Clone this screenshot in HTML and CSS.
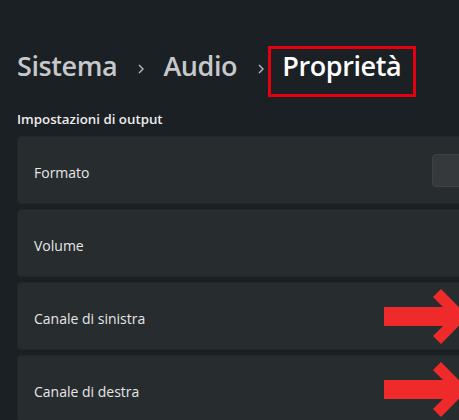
FILE: index.html
```html
<!DOCTYPE html>
<html lang="it">
<head>
<meta charset="utf-8">
<link rel="stylesheet" href="styles.css">
</head>
<body>
<main class="page">
  <nav class="crumbs">
    <span class="crumb">Sistema</span>
    <svg class="chev" width="6" height="10" viewBox="0 0 6 10"><path d="M1 1 L5 5 L1 9" fill="none" stroke="#b8babc" stroke-width="1.4"/></svg>
    <span class="crumb">Audio</span>
    <svg class="chev" width="6" height="10" viewBox="0 0 6 10"><path d="M1 1 L5 5 L1 9" fill="none" stroke="#b8babc" stroke-width="1.4"/></svg>
    <span class="crumb current">Proprietà</span>
  </nav>
  <h2 class="section">Impostazioni di output</h2>
  <div class="cards">
    <div class="card"><span class="label">Formato</span><div class="dropdown"></div></div>
    <div class="card"><span class="label">Volume</span></div>
    <div class="card"><span class="label">Canale di sinistra</span>
      <svg class="arrow" width="90" height="56" viewBox="0 0 90 56"><polygon points="0,18 59,18 49,8 57,0 84,27.5 57,55 49,47 59,37 0,37" fill="#ee2a2a"/></svg>
    </div>
    <div class="card"><span class="label">Canale di destra</span>
      <svg class="arrow" width="90" height="56" viewBox="0 0 90 56"><polygon points="0,18 59,18 49,8 57,0 84,27.5 57,55 49,47 59,37 0,37" fill="#ee2a2a"/></svg>
    </div>
  </div>
</main>
</body>
</html>
```
FILE: styles.css
```css
html, body {
  margin: 0;
  padding: 0;
  background: #1b2025;
  overflow: hidden;
  width: 459px;
  height: 420px;
}
.page {
  padding: 46px 0 0 17px;
  font-family: "Open Sans", "Noto Sans", sans-serif;
  color: #e8e8e8;
}
.crumbs {
  display: flex;
  align-items: baseline;
  font-size: 27px;
  letter-spacing: -0.4px;
  font-weight: 600;
  line-height: 34px;
  white-space: nowrap;
}
.crumb {
  color: #c6c8ca;
}
.chev {
  margin: 0 19px 0 21px;
  align-self: center;
  position: relative;
  top: -3px;
}
.crumb.current {
  color: #ffffff;
  border: 3px solid #e4000f;
  padding: 0 12px 11px 11px;
  margin-left: -15px;
}
.section {
  margin: 13px 0 8px 0;
  font-size: 13.3px;
  line-height: 18px;
  font-weight: 600;
  color: #ececec;
}
.cards {
  display: flex;
  flex-direction: column;
  gap: 5px;
}
.card {
  position: relative;
  width: 560px;
  height: 68px;
  box-sizing: border-box;
  padding: 0 16px;
  display: flex;
  align-items: center;
  justify-content: space-between;
  background: #272c2f;
  border: 1px solid #23272a;
  border-radius: 4px;
  font-size: 14px;
  color: #e6e6e6;
}
.label {
  padding-top: 4px;
}
.dropdown {
  width: 128px;
  height: 33px;
  box-sizing: border-box;
  background: #35393c;
  border: 1px solid #3e4245;
  border-radius: 4px;
}
.arrow {
  position: absolute;
  left: 366px;
  top: 6px;
}
```
